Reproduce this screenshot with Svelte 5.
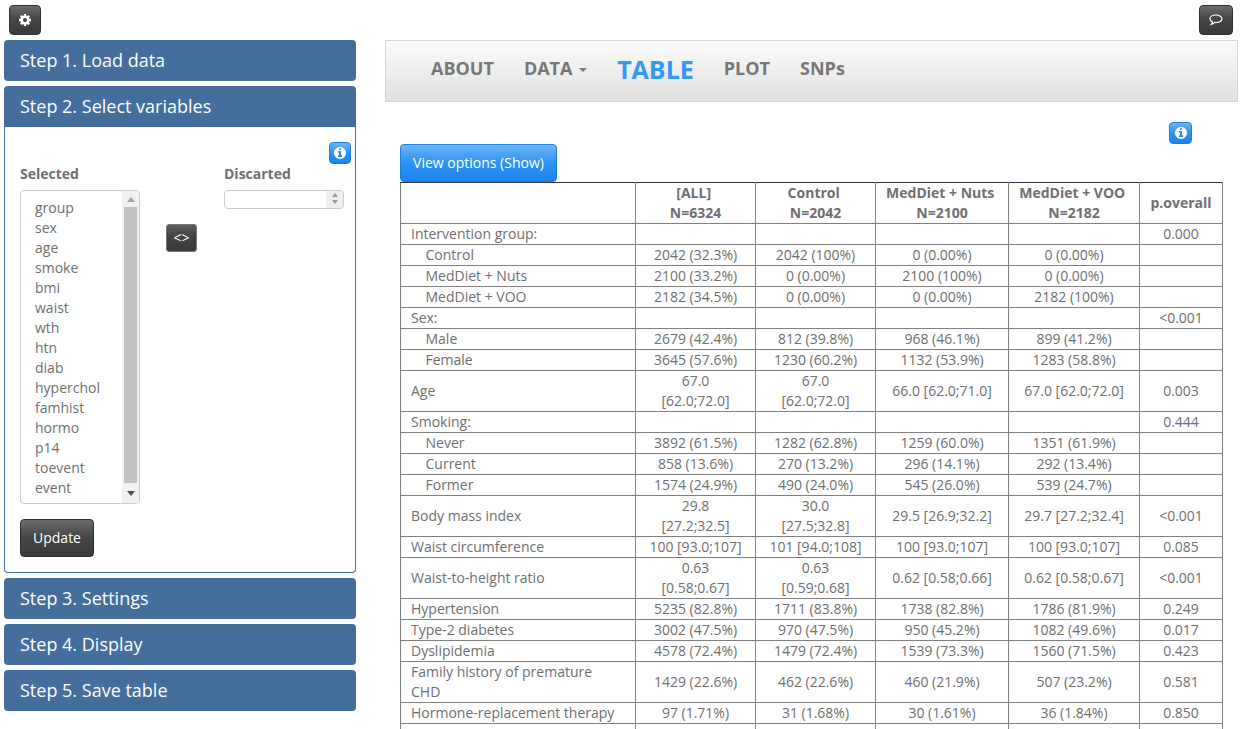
<script>
  const vars = ['group','sex','age','smoke','bmi','waist','wth','htn','diab','hyperchol','famhist','hormo','p14','toevent','event'];
  const rows = [
    ['Intervention group:','','','','','0.000',0],
    ['Control','2042 (32.3%)','2042 (100%)','0 (0.00%)','0 (0.00%)','',1],
    ['MedDiet + Nuts','2100 (33.2%)','0 (0.00%)','2100 (100%)','0 (0.00%)','',1],
    ['MedDiet + VOO','2182 (34.5%)','0 (0.00%)','0 (0.00%)','2182 (100%)','',1],
    ['Sex:','','','','','<0.001',0],
    ['Male','2679 (42.4%)','812 (39.8%)','968 (46.1%)','899 (41.2%)','',1],
    ['Female','3645 (57.6%)','1230 (60.2%)','1132 (53.9%)','1283 (58.8%)','',1],
    ['Age','67.0 [62.0;72.0]','67.0 [62.0;72.0]','66.0 [62.0;71.0]','67.0 [62.0;72.0]','0.003',0],
    ['Smoking:','','','','','0.444',0],
    ['Never','3892 (61.5%)','1282 (62.8%)','1259 (60.0%)','1351 (61.9%)','',1],
    ['Current','858 (13.6%)','270 (13.2%)','296 (14.1%)','292 (13.4%)','',1],
    ['Former','1574 (24.9%)','490 (24.0%)','545 (26.0%)','539 (24.7%)','',1],
    ['Body mass index','29.8 [27.2;32.5]','30.0 [27.5;32.8]','29.5 [26.9;32.2]','29.7 [27.2;32.4]','<0.001',0],
    ['Waist circumference','100 [93.0;107]','101 [94.0;108]','100 [93.0;107]','100 [93.0;107]','0.085',0],
    ['Waist-to-height ratio','0.63 [0.58;0.67]','0.63 [0.59;0.68]','0.62 [0.58;0.66]','0.62 [0.58;0.67]','<0.001',0],
    ['Hypertension','5235 (82.8%)','1711 (83.8%)','1738 (82.8%)','1786 (81.9%)','0.249',0],
    ['Type-2 diabetes','3002 (47.5%)','970 (47.5%)','950 (45.2%)','1082 (49.6%)','0.017',0],
    ['Dyslipidemia','4578 (72.4%)','1479 (72.4%)','1539 (73.3%)','1560 (71.5%)','0.423',0],
    ['Family history of premature CHD','1429 (22.6%)','462 (22.6%)','460 (21.9%)','507 (23.2%)','0.581',0],
    ['Hormone-replacement therapy','97 (1.71%)','31 (1.68%)','30 (1.61%)','36 (1.84%)','0.850',0],
    ['','','','','','',0]
  ];
  const info = "M1152 1376v-160q0-14-9-23t-23-9h-96v-512q0-14-9-23t-23-9h-320q-14 0-23 9t-9 23v160q0 14 9 23t23 9h96v320h-96q-14 0-23 9t-9 23v160q0 14 9 23t23 9h448q14 0 23-9t9-23zm-128-896v-160q0-14-9-23t-23-9h-192q-14 0-23 9t-9 23v160q0 14 9 23t23 9h192q14 0 23-9t9-23zm640 416q0 209-103 385.5t-279.5 279.5-385.5 103-385.5-103-279.5-279.5-103-385.5 103-385.5 279.5-279.5 385.5-103 385.5 103 279.5 279.5 103 385.5z";
  const cog = "M1152 896q0-106-75-181t-181-75-181 75-75 181 75 181 181 75 181-75 75-181zm512-109v222q0 12-8 23t-20 13l-185 28q-19 54-39 91 35 50 107 138 10 12 10 25t-9 23q-27 37-99 108t-94 71q-12 0-26-9l-138-108q-44 23-91 38-16 136-29 186-7 28-36 28h-222q-14 0-24.5-8.5t-11.5-21.5l-28-184q-49-16-90-37l-141 107q-10 9-25 9-14 0-25-11-126-114-165-168-7-10-7-23 0-12 8-23 15-21 51-66.5t54-70.5q-27-50-41-99l-183-27q-13-2-21-12.5t-8-23.5v-222q0-12 8-23t19-13l186-28q14-46 39-92-40-57-107-138-10-12-10-24 0-10 9-23 26-36 98.5-107.5t94.5-71.5q13 0 26 10l138 107q44-23 91-38 16-136 29-186 7-28 36-28h222q14 0 24.5 8.5t11.5 21.5l28 184q49 16 90 37l142-107q9-9 24-9 13 0 25 10 129 119 165 170 7 8 7 22 0 12-8 23-15 21-51 66.5t-54 70.5q26 50 41 98l183 28q13 2 21 12.5t8 23.5z";
</script>

<div class="page">
  <div class="topbar">
    <button class="btn dark cogbtn" aria-label="settings"><svg viewBox="0 0 1792 1792" width="14" height="14"><path fill="#fff" d={cog}/></svg></button>
    <button class="btn dark chatbtn" aria-label="comment">
      <svg viewBox="0 0 14 12" width="14" height="12"><path fill="none" stroke="#fff" stroke-width="1.2" d="M7 1C3.6 1 1 2.7 1 4.8c0 1.300 1 2.400 2.500 3.100-.1.900-.6 1.800-1.200 2.400 1.200-.2 2.600-1 3.400-1.900.5.100.9.100 1.300.1 3.400 0 6-1.700 6-3.700S10.400 1 7 1z"/></svg>
    </button>
  </div>

  <div class="columns">
    <aside class="sidebar">
      <div class="head">Step 1. Load data</div>
      <section class="open">
        <div class="head flat">Step 2. Select variables</div>
        <div class="body">
          <div class="inforow">
            <button class="btn blue infobtn" aria-label="info"><svg viewBox="0 0 1792 1792" width="14" height="14"><path fill="#fff" d={info}/></svg></button>
          </div>
          <div class="pickers">
            <div class="picker">
              <div class="lbl">Selected</div>
              <div class="listbox">
                <div class="items">
                  {#each vars as v}<div>{v}</div>{/each}
                </div>
                <div class="scroll">
                  <span class="up"></span>
                  <span class="thumb"></span>
                  <span class="down"></span>
                </div>
              </div>
            </div>
            <button class="btn dark swap">&lt;&gt;</button>
            <div class="picker second">
              <div class="lbl">Discarted</div>
              <div class="numbox">
                <div class="spin"><span class="su"></span><span class="sd"></span></div>
              </div>
            </div>
          </div>
          <button class="btn dark update">Update</button>
        </div>
      </section>
      <div class="head">Step 3. Settings</div>
      <div class="head">Step 4. Display</div>
      <div class="head">Step 5. Save table</div>
    </aside>

    <main class="main">
      <nav class="navbar">
        <ul>
          <li>ABOUT</li>
          <li>DATA <span class="caret"></span></li>
          <li class="active">TABLE</li>
          <li>PLOT</li>
          <li>SNPs</li>
        </ul>
      </nav>
      <div class="content">
        <div class="inforight">
          <button class="btn blue infobtn wide" aria-label="info"><svg viewBox="0 0 1792 1792" width="14" height="14"><path fill="#fff" d={info}/></svg></button>
        </div>
        <button class="btn blue viewopts">View options (Show)</button>
        <table>
          <colgroup>
            <col class="c0"/><col class="c1"/><col class="c1"/><col class="c2"/><col class="c3"/><col class="c4"/>
          </colgroup>
          <thead>
            <tr>
              <th></th>
              <th>[ALL]&nbsp;<br/>N=6324</th>
              <th>Control&nbsp;<br/>N=2042</th>
              <th>MedDiet + Nuts&nbsp;<br/>N=2100</th>
              <th>MedDiet + VOO&nbsp;<br/>N=2182</th>
              <th>p.overall</th>
            </tr>
          </thead>
          <tbody>
            {#each rows as r}
              <tr>
                <td class="name" class:sub={r[6]}>{r[0]}</td>
                <td>{r[1]}</td><td>{r[2]}</td><td>{r[3]}</td><td>{r[4]}</td><td>{r[5]}</td>
              </tr>
            {/each}
          </tbody>
        </table>
      </div>
    </main>
  </div>
</div>

<style>
  :global(html), :global(body) { margin: 0; overflow: hidden; background: #fff; }
  .page {
    height: 729px; overflow: hidden; box-sizing: border-box;
    font-family: "Open Sans", sans-serif; font-size: 14px; line-height: 20px; color: #6f6f6f;
  }
  .topbar { display: flex; justify-content: space-between; padding: 5px 10px 0 9px; height: 40px; box-sizing: border-box; }
  .btn {
    box-sizing: border-box; font-family: inherit; font-size: 14px; line-height: 20px; color: #fff;
    border-radius: 4px; padding: 0; margin: 0; display: flex; align-items: center; justify-content: center;
  }
  .dark { background: linear-gradient(#6c6c6c, #474747 45%, #3a3a3a); border: 1px solid #333; }
  .blue { background: linear-gradient(#6cb5fa, #2f92f1 50%, #1a84ee); border: 1px solid #1b7edb; }
  .cogbtn { width: 32px; height: 30px; }
  .chatbtn { width: 34px; height: 30px; }

  .columns { display: flex; align-items: flex-start; padding-left: 4px; }
  .sidebar { width: 352px; flex: none; display: flex; flex-direction: column; gap: 5px; }
  .head {
    background: #446e9b; color: #fff; font-size: 18px; line-height: 20px;
    padding: 10px 16px 11px; border-radius: 4px;
  }
  .head.flat { border-radius: 4px 4px 0 0; }
  .open { display: flex; flex-direction: column; }
  .body {
    border: 1px solid #446e9b; border-top: 0; border-radius: 0 0 4px 4px;
    height: 446px; box-sizing: border-box; padding: 15px 4px 0 15px;
  }
  .inforow { display: flex; justify-content: flex-end; height: 22px; }
  .infobtn { width: 22px; height: 22px; }
  .infobtn.wide { width: 23px; }
  .pickers { display: flex; align-items: flex-start; margin-top: 1px; height: 339px; }
  .picker { width: 120px; flex: none; }
  .lbl { font-weight: 700; margin-bottom: 6px; height: 20px; margin-top: -1px; }
  .listbox {
    width: 120px; height: 314px; box-sizing: border-box; border: 1px solid #ccc; border-radius: 4px;
    display: flex; overflow: hidden; margin-top: 0;
  }
  .items { flex: 1; padding: 7px 0 0 14px; }
  .scroll { width: 17px; background: #f1f1f1; display: flex; flex-direction: column; align-items: center; }
  .up { width: 0; height: 0; border: 4px solid transparent; border-top: 0; border-bottom: 5px solid #a3a3a3; margin-top: 6px; }
  .thumb { width: 13px; height: 276px; background: #c1c1c1; margin-top: 5px; }
  .down { width: 0; height: 0; border: 4px solid transparent; border-bottom: 0; border-top: 5px solid #505050; margin-top: 8px; }
  .swap { width: 31px; height: 28px; margin: 59px 0 0 26px; border-color: #777; border-radius: 3px; background: linear-gradient(#5c5c5c, #444 45%, #3a3a3a); flex: none; }
  .picker.second { margin-left: 27px; }
  .numbox {
    width: 120px; height: 19px; box-sizing: border-box; border: 1px solid #ccc; border-radius: 4px;
    display: flex; justify-content: flex-end; overflow: hidden;
  }
  .spin { width: 17px; background: #efefef; display: flex; flex-direction: column; align-items: center; gap: 3px; padding-top: 2px; box-sizing: border-box; }
  .su { width: 0; height: 0; border: 3.500px solid transparent; border-top: 0; border-bottom: 4px solid #9a9a9a; }
  .sd { width: 0; height: 0; border: 3.500px solid transparent; border-bottom: 0; border-top: 4px solid #9a9a9a; }
  .update { width: 74px; height: 38px; margin-top: 15px; border-color: #2e2e2e; }

  .main { width: 853px; margin-left: 29px; flex: none; }
  .navbar {
    height: 62px; box-sizing: border-box; border: 1px solid #d5d5d5;
    background: linear-gradient(#fbfbfb, #e1e1e1);
  }
  .navbar ul { list-style: none; margin: 0; padding: 14px 0 0 30px; box-sizing: border-box; display: flex; align-items: flex-start; height: 100%; }
  .navbar li { padding: 0 15px; font-size: 18px; font-weight: 700; color: #777; line-height: 26px; white-space: nowrap; }
  .navbar li.active { font-size: 25px; color: #3399f3; line-height: 26px; margin-top: 1px; }
  .caret {
    display: inline-block; width: 0; height: 0; margin-left: 2px; vertical-align: middle;
    border-top: 4px solid #777; border-left: 4px solid transparent; border-right: 4px solid transparent;
  }
  .content { padding: 20px 0 0 15px; }
  .inforight { display: flex; justify-content: flex-end; height: 22px; padding-right: 46px; }
  .viewopts { width: 157px; height: 38px; border-radius: 4px; }

  table {
    border-collapse: collapse; table-layout: fixed; width: 822px; border: 1px solid #333;
    line-height: 20px; font-size: 14px;
  }
  .c0 { width: 235px; } .c1 { width: 120px; } .c2 { width: 133px; } .c3 { width: 131px; } .c4 { width: 83px; }
  th, td { border: 1px solid #808080; padding: 0 10px; text-align: center; font-weight: 400; }
  th { font-weight: 700; padding: 0; }
  thead th { border-top: 1px solid #333; }
  thead tr { height: 41px; }
  tbody tr { height: 21px; }
  td.name { text-align: left; padding-right: 15px; }
  td.sub { padding-left: 24.5px; }
</style>
